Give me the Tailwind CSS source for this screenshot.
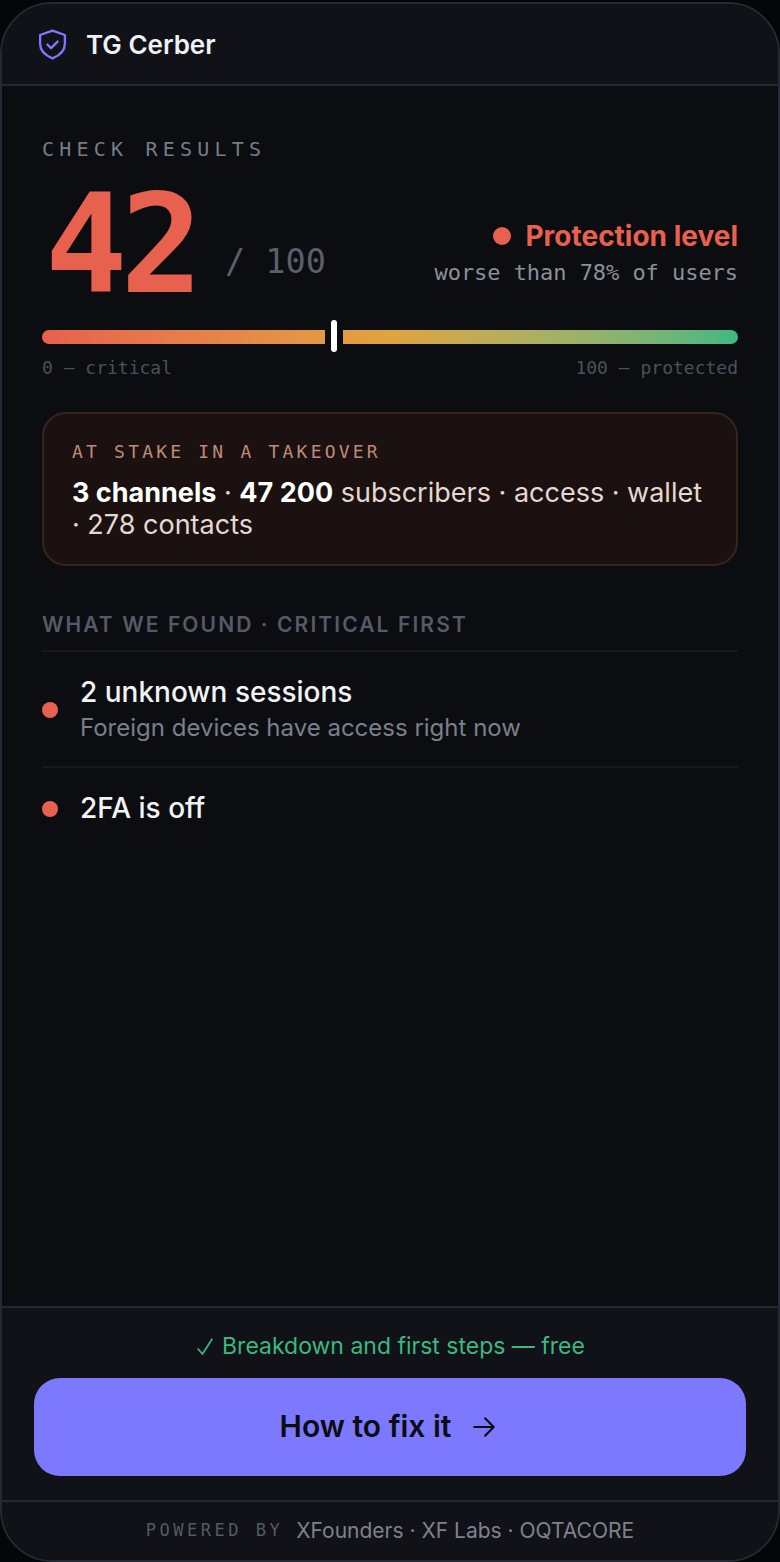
<!DOCTYPE html>
<html lang="en">
<head>
<meta charset="UTF-8">
<title>TG Cerber</title>
<script src="https://cdn.jsdelivr.net/npm/@tailwindcss/browser@4"></script>
</head>
<body class="bg-[#050608] font-['Inter',sans-serif] pt-[2px]">
<div class="w-[780px] h-[1560px] rounded-[52px] border-2 border-[#232a33] bg-[#0b0d11] flex flex-col overflow-hidden">
  <!-- header -->
  <header class="h-[82px] shrink-0 bg-[#101217] border-b-2 border-[#232a33] flex items-center pl-[33px] gap-[16px]">
    <svg class="w-[35px] h-[35px] text-[#7d79ff]" viewBox="0 0 24 24" fill="none" stroke="currentColor" stroke-width="1.6" stroke-linecap="round" stroke-linejoin="round">
      <path d="M12 2.500 20.500 5.500V11.500c0 4.800-3.600 8-8.500 10-4.900-2-8.500-5.200-8.500-10V5.500Z"/>
      <path d="m8.500 12 2.500 2.500 4.500-4.500"/>
    </svg>
    <span class="text-[26px] font-semibold text-[#f0f1f4]">TG Cerber</span>
  </header>

  <main class="flex-1 px-[40px] pt-[50px]">
    <p class="font-['DejaVu_Sans_Mono',monospace] text-[20px] leading-[26px] tracking-[5.2px] text-[#787c86]">CHECK RESULTS</p>

    <div class="flex items-end justify-between mt-[10px] h-[132px]">
      <div class="flex items-end">
        <span class="font-['DejaVu_Sans_Mono',monospace] text-[137px] leading-[118px] font-bold tracking-[-7px] ml-[3px] text-[#e8604e]">42</span>
        <span class="font-['DejaVu_Sans_Mono',monospace] text-[33.500px] leading-[40px] text-[#5a5f6b] ml-[29px] mb-[22px]">/ 100</span>
      </div>
      <div class="flex flex-col items-end pb-[13px]">
        <div class="flex items-center gap-[14px]">
          <span class="w-[18px] h-[18px] rounded-full bg-[#e8604e]"></span>
          <span class="text-[28px] leading-[38px] font-bold text-[#e8604e]">Protection level</span>
        </div>
        <span class="font-['DejaVu_Sans_Mono',monospace] text-[22px] leading-[36px] tracking-[-0.05px] text-[#8b909b]">worse than 78% of users</span>
      </div>
    </div>

    <!-- score bar -->
    <div class="relative h-[14px] mt-[26px] rounded-full bg-gradient-to-r from-[#e8604e] via-[#e0a43f] via-50% to-[#3cb882]">
      <div class="absolute left-[283px] top-[-5px] w-[18px] h-[24px] bg-[#0b0d11]"></div>
      <div class="absolute left-[289px] top-[-10px] w-[6px] h-[32px] rounded-full bg-white"></div>
    </div>
    <div class="flex justify-between mt-[12px] font-['DejaVu_Sans_Mono',monospace] text-[18px] leading-[24px] text-[#4c505b]">
      <span>0 — critical</span>
      <span>100 — protected</span>
    </div>

    <!-- at stake -->
    <div class="mt-[32px] h-[154px] rounded-[24px] border-2 border-[#38241f] bg-[#1a1110] px-[28px] pt-[25px]">
      <p class="font-['DejaVu_Sans_Mono',monospace] text-[18px] leading-[26px] tracking-[3.2px] text-[#c08a78]">AT STAKE IN A TAKEOVER</p>
      <p class="mt-[12px] text-[27px] leading-[32px] text-[#e6d8d0]"><b class="font-bold text-white">3 channels</b> · <b class="font-bold text-white">47 200</b> subscribers · access · wallet · 278 contacts</p>
    </div>

    <p class="mt-[43px] text-[21px] leading-[32px] font-semibold tracking-[2.1px] text-[#565a66]">WHAT WE FOUND · CRITICAL FIRST</p>

    <ul class="mt-[9px]">
      <li class="border-t-2 border-[#15181d] flex items-center h-[116px] pt-[2px]">
        <span class="w-[16px] h-[16px] rounded-full bg-[#e8604e]"></span>
        <div class="ml-[22px]">
          <p class="mt-[-1px] mb-[1px] text-[28px] leading-[36px] font-medium text-[#f2f3f5]">2 unknown sessions</p>
          <p class="text-[24px] leading-[34px] text-[#7a7f8c]">Foreign devices have access right now</p>
        </div>
      </li>
      <li class="border-t-2 border-[#15181d] flex items-center h-[82px] pt-[2px]">
        <span class="w-[16px] h-[16px] rounded-full bg-[#e8604e]"></span>
        <p class="ml-[22px] mt-[-2px] text-[28px] leading-[36px] font-medium text-[#f2f3f5]">2FA is off</p>
      </li>
    </ul>
  </main>

  <!-- cta -->
  <section class="shrink-0 bg-[#101217] border-t-2 border-[#232a33] h-[194px] px-[32px] pt-[20px]">
    <p class="flex items-center justify-center gap-[9px] pl-[2px] text-[23px] leading-[36px] text-[#3cb882]">
      <svg class="w-[16px] h-[17px]" viewBox="0 0 16 17" fill="none" stroke="currentColor" stroke-width="1.700"><path d="M0.600 10.500 5.500 16 15.300 0.800"/></svg>
      <span>Breakdown and first steps — free</span>
    </p>
    <button class="mt-[14px] w-full h-[98px] rounded-[26px] bg-[#7d79ff] flex items-center justify-center gap-[20px] text-[30px] font-semibold text-[#0b0d11]">
      <span class="mt-[-2px] ml-[-1px]">How to fix it</span>
      <svg class="w-[26px] h-[26px] mr-[2px]" viewBox="0 0 24 24" fill="none" stroke="currentColor" stroke-width="2" stroke-linecap="round" stroke-linejoin="round"><path d="M3 12h18M13 4l8 8-8 8"/></svg>
    </button>
  </section>

  <footer class="shrink-0 bg-[#101217] border-t-2 border-[#232a33] h-[60px] flex items-center justify-center gap-[13px] pb-[1px]">
    <span class="font-['DejaVu_Sans_Mono',monospace] text-[17px] tracking-[3.5px] text-[#555964]">POWERED BY</span>
    <span class="text-[21px] text-[#7f828c]">XFounders · XF Labs · OQTACORE</span>
  </footer>
</div>
</body>
</html>
